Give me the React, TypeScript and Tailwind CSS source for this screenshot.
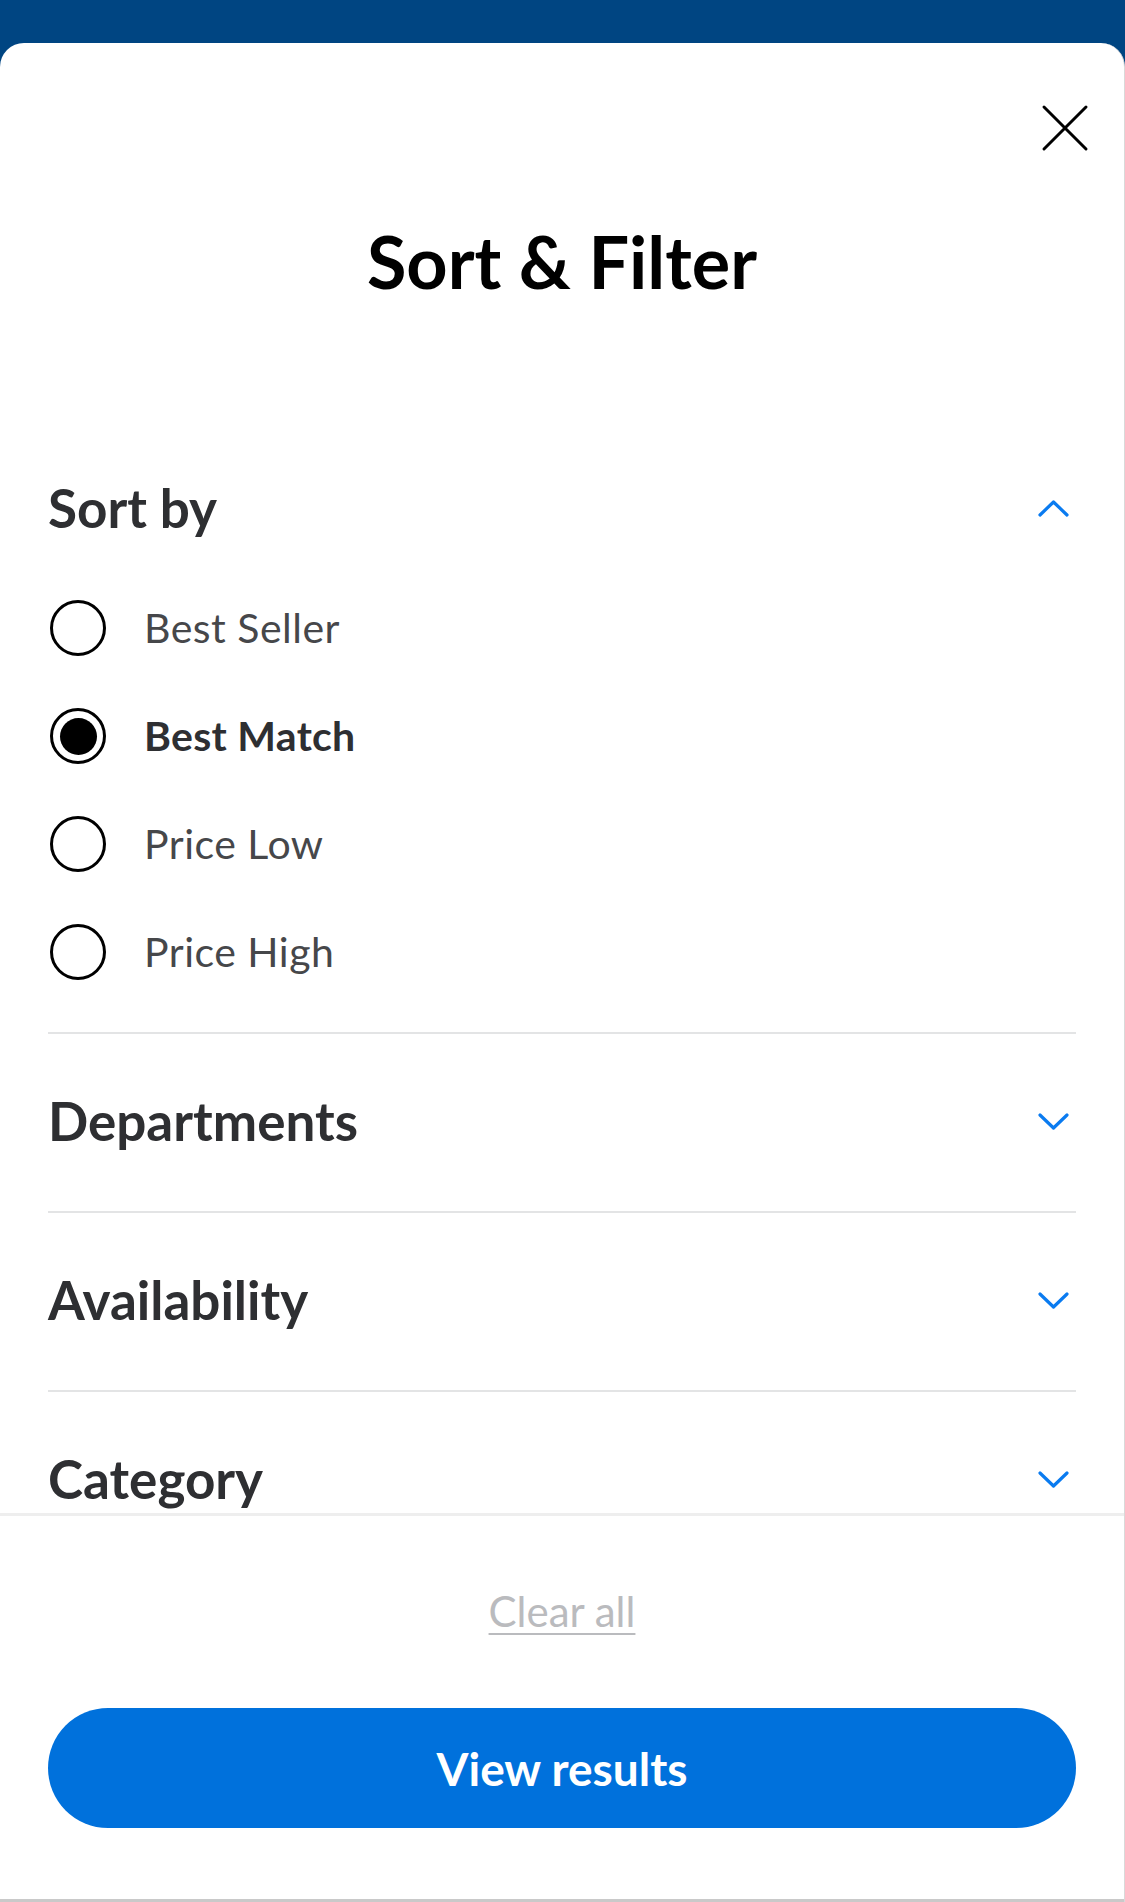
import React from "react";

const font = { fontFamily: "Lato, 'Noto Sans', sans-serif" };

function Chevron({ up }: { up?: boolean }) {
  return (
    <svg width="31" height="17" viewBox="0 0 31 17" fill="none">
      <path
        d={up ? "M2 15 L15.5 2 L29 15" : "M2 2 L15.5 15 L29 2"}
        stroke="#0a7bf0"
        strokeWidth="3.2"
        strokeLinecap="round"
        strokeLinejoin="round"
      />
    </svg>
  );
}

function Radio({ label, checked }: { label: string; checked?: boolean }) {
  return (
    <div className="h-[108px] flex items-center pl-[50px]">
      <div className="w-[56px] h-[56px] rounded-full border-[3px] border-black flex items-center justify-center shrink-0">
        {checked && <div className="w-[37px] h-[37px] rounded-full bg-black" />}
      </div>
      <span
        className={
          checked
            ? "ml-[38px] text-[41px] tracking-[0.3px] font-bold text-[#2e2f32]"
            : "ml-[38px] text-[41px] tracking-[0.5px] text-[#46474a]"
        }
      >
        {label}
      </span>
    </div>
  );
}

function Section({ title }: { title: string }) {
  return (
    <div>
      <div className="h-[2px] bg-[#e3e4e5] mx-[48px]" />
      <div className="h-[177px] flex items-center justify-between pl-[48px] pr-[55px] pb-[3px]">
        <span className="text-[53px] font-bold text-[#2e2f32]">{title}</span>
        <Chevron />
      </div>
    </div>
  );
}

export default function App() {
  return (
    <div className="w-[1125px] h-[1902px] bg-[#004582] pt-[43px] flex flex-col" style={font}>
      <div className="flex-1 bg-white rounded-t-[24px] flex flex-col overflow-hidden border-r border-[#d9d9d9]">
        <div className="h-[1470px] overflow-hidden">
          <div className="flex justify-end pt-[61px] pr-[35px]">
            <svg width="48" height="48" viewBox="0 0 48 48" fill="none">
              <path d="M3 3 L45 45 M45 3 L3 45" stroke="#000" strokeWidth="3" strokeLinecap="round" />
            </svg>
          </div>
          <div className="h-[222px] flex items-center justify-center pb-[4px]">
            <h1 className="text-[72px] font-bold text-black leading-none">Sort &amp; Filter</h1>
          </div>
          <div className="mt-[76px] h-[120px] flex items-center justify-between pl-[48px] pr-[55px] pb-[4px]">
            <span className="text-[53px] font-bold text-[#2e2f32]">Sort by</span>
            <Chevron up />
          </div>
          <div className="mt-[4px]">
            <Radio label="Best Seller" />
            <Radio label="Best Match" checked />
            <Radio label="Price Low" />
            <Radio label="Price High" />
          </div>
          <div className="mt-[26px]">
            <Section title="Departments" />
            <Section title="Availability" />
            <Section title="Category" />
          </div>
        </div>
        <div className="flex-1 border-t-[3px] border-[#eeeeee] flex flex-col items-center relative">
          <span className="mt-[71px] text-[42px] leading-[48px] text-[#babbbe] underline decoration-2 underline-offset-[6px]">
            Clear all
          </span>
          <button className="mt-[73px] w-[1028px] h-[120px] rounded-full bg-[#0071dc] text-white text-[46px] font-bold">
            View results
          </button>
          <div className="absolute bottom-0 left-0 right-0 h-[3px] bg-[#c9c9c9]" />
        </div>
      </div>
    </div>
  );
}
